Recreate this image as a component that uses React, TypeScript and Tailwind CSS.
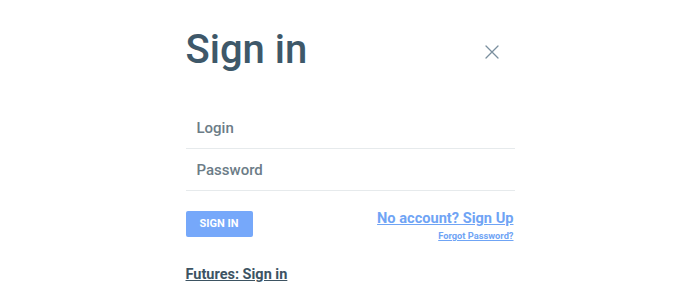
import React, { useState } from "react";

function CloseIcon() {
  return (
    <svg width={14} height={14} viewBox="0 0 14 14" fill="none" className="block">
      <path d="M1 1L13 13M13 1L1 13" stroke="#7a8f9e" strokeWidth={1.3} strokeLinecap="round" />
    </svg>
  );
}

function Field(props: { placeholder: string; type?: string }) {
  const { placeholder, type } = props;
  return (
    <div className="border-b border-[#e6eaec] w-full">
      <input
        type={type ?? "text"}
        placeholder={placeholder}
        className="w-full h-[41px] px-[11px] bg-transparent outline-none text-[15px] font-medium text-[#3e5565] placeholder:text-[#6c7c87]"
      />
    </div>
  );
}

export default function App() {
  const [open] = useState(true);
  if (!open) return null;
  return (
    <div className="w-[700px] h-[300px] bg-white font-['Roboto',sans-serif] flex justify-center">
      <div className="w-[329px] flex flex-col pt-[24px]">
        <div className="flex items-center justify-between">
          <h1 className="text-[40px] leading-[52px] font-medium text-[#3e5869]">Sign in</h1>
          <button type="button" className="mr-[16px] mt-[4px] p-0 cursor-pointer">
            <CloseIcon />
          </button>
        </div>
        <div className="flex flex-col mt-[31px]">
          <Field placeholder="Login" />
          <Field placeholder="Password" type="password" />
        </div>
        <div className="flex items-start justify-between mt-[20px] pr-[1px]">
          <button
            type="button"
            className="w-[67px] h-[26px] rounded-[2px] bg-[#76a8fa] text-white text-[11px] font-bold uppercase"
          >
            Sign in
          </button>
          <div className="flex flex-col items-end -mt-[2px]">
            <a href="#" className="text-[14.6px] leading-[18px] font-bold text-[#6fa4f5] underline">
              No account? Sign Up
            </a>
            <a href="#" className="mt-[3px] text-[9.3px] leading-[11px] font-bold text-[#6fa4f5] underline">
              Forgot Password?
            </a>
          </div>
        </div>
        <a href="#" className="mt-[25px] self-start text-[14.5px] leading-[18px] font-bold text-[#3d5362] underline">
          Futures: Sign in
        </a>
      </div>
    </div>
  );
}
